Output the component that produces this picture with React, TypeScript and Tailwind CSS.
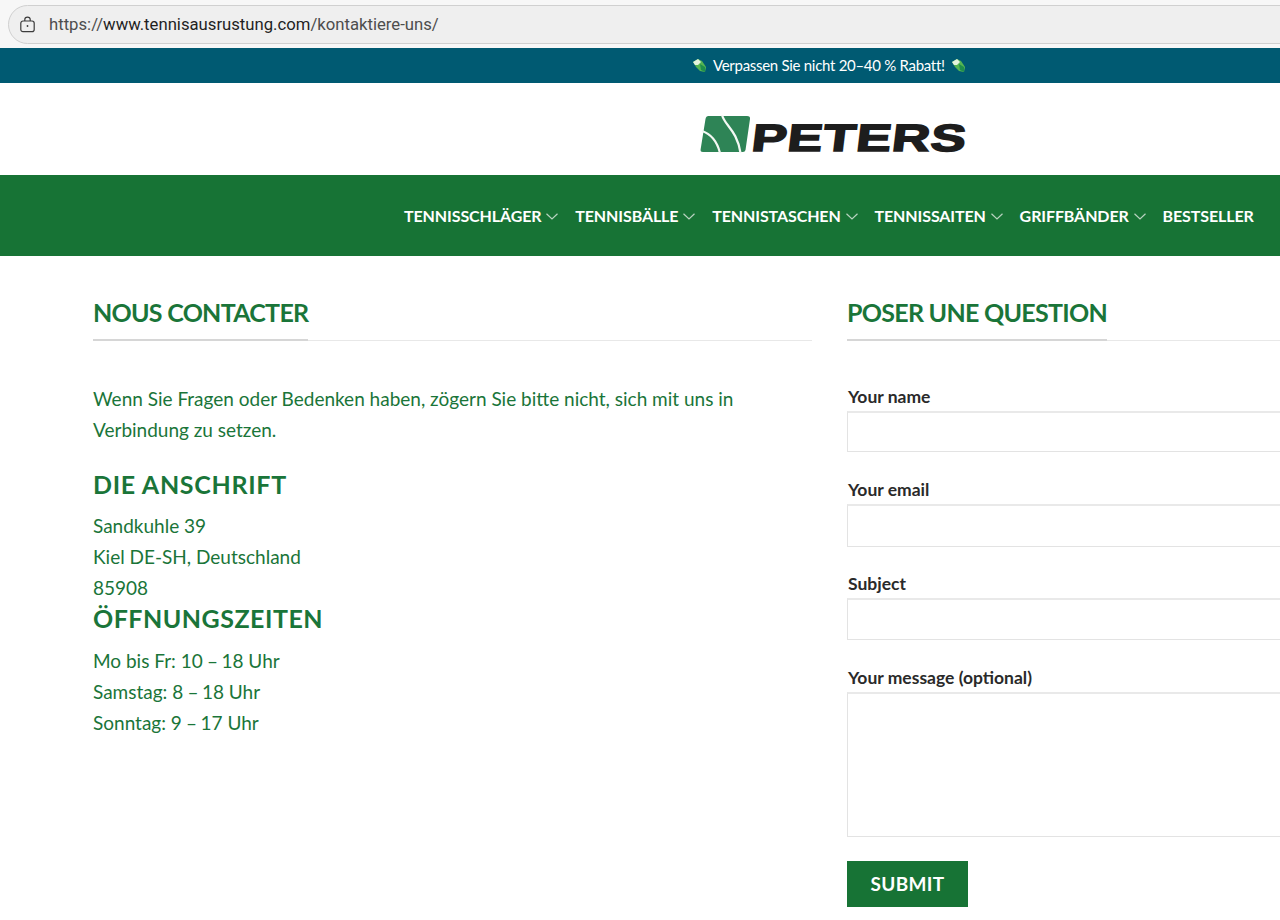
import React from "react";

function Leaf() {
  return (
    <svg width="15" height="15" viewBox="0 0 15 15" className="shrink-0">
      <path d="M1 4 L6 1 L10 3 L14 9 L13 14 L8 13 L4 9 Z" fill="#55b552" />
      <path d="M1 4 L6 1 L9 4 L6 7 L3 7 Z" fill="#e4f3dc" />
      <path d="M8 6 L13 9 L13 14 L9 12 Z" fill="#1f8f4c" />
    </svg>
  );
}

function Logo() {
  return (
    <svg width="52" height="38" viewBox="0 0 52 38" className="shrink-0">
      <path d="M9.5 1 L48 1 Q51.5 1 51 4 L46.5 35 Q46 37 44 37 L4 37 Q1.2 37 1.6 34.5 L6.5 4 Q7 1 9.5 1 Z" fill="#2e8456" />
      <path d="M23 0 C26 11 38 15 41.5 38" stroke="#f4f8f4" strokeWidth="2.2" fill="none" />
      <path d="M3 16 C12 19 18 26 21 38" stroke="#f4f8f4" strokeWidth="2.2" fill="none" />
    </svg>
  );
}

function Chevron() {
  return (
    <svg width="12" height="7" viewBox="0 0 12 7" fill="none" stroke="#b9d3c0" strokeWidth="1.2" className="shrink-0">
      <path d="M0.5 0.8 L6 6 L11.5 0.8" />
    </svg>
  );
}

function SectionTitle({ children }: { children: React.ReactNode }) {
  return (
    <div className="border-b border-[#e8e8e8] h-[50px] flex">
      <h2 className="h-[50px] border-b-2 border-[#d6d6d6] text-[25px] leading-[42px] font-bold text-[#1a7539] tracking-[-0.72px] whitespace-nowrap">
        {children}
      </h2>
    </div>
  );
}

function Field({ label, h, mb }: { label: string; h: string; mb: string }) {
  return (
    <div className={mb}>
      <div className="pl-px text-[17.5px] leading-[26px] font-bold text-[#2a2a2a] tracking-[0px] h-[24px]">{label}</div>
      <div className={`${h} mt-[3px] border border-[#e3e3e3] border-t-2 border-t-[#e9e9e9] bg-white`} />
    </div>
  );
}

const navItems = [
  { t: "TENNISSCHLÄGER", c: true },
  { t: "TENNISBÄLLE", c: true },
  { t: "TENNISTASCHEN", c: true },
  { t: "TENNISSAITEN", c: true },
  { t: "GRIFFBÄNDER", c: true },
  { t: "BESTSELLER", c: false },
];

function Hours({ a, b }: { a: string; b: string }) {
  return (
    <div>
      {a}
      <span className="tracking-[-0.7px]"> – </span>
      {b}
    </div>
  );
}

export default function App() {
  return (
    <div className="w-[1280px] h-[920px] overflow-hidden bg-white font-['Lato','Liberation_Sans',sans-serif]">
      <div className="h-[48px] bg-[#f7f7f7] pt-[5px] pl-[8px]">
        <div className="h-[39px] w-[1300px] rounded-l-[20px] bg-[#efefef] border border-[#d0d0d0] flex items-center pl-[11px] gap-[14px]">
          <svg width="15" height="17" viewBox="0 0 15 17" fill="none" stroke="#3c3c3c" strokeWidth="1.2" className="shrink-0">
            <rect x="0.8" y="5" width="13.4" height="10.6" rx="2.2" />
            <path d="M4.8 5 V3.4 a2.7 2.3 0 0 1 5.4 0 V5" />
            <circle cx="7.5" cy="10" r="0.9" fill="#3c3c3c" stroke="none" />
          </svg>
          <span className="font-['Roboto',sans-serif] text-[16.7px] text-[#1f1f1f] whitespace-nowrap">
            <span className="text-[#4d4d4d]">https://</span>www.tennisausrustung.com<span className="text-[#4d4d4d]">/kontaktiere-uns/</span>
          </span>
        </div>
      </div>

      <div className="h-[35px] bg-[#005a72] flex items-center pl-[692px] gap-[6px] text-[15px] tracking-[-0.29px] text-white">
        <Leaf />
        <span className="whitespace-nowrap">Verpassen Sie nicht 20–40 % Rabatt!</span>
        <Leaf />
      </div>

      <div className="h-[92px] bg-white flex items-center pl-[699px] pt-[9px]">
        <Logo />
        <span className="ml-[1px] mt-[8px] inline-block origin-left scale-x-[1.38] skew-x-[-5deg] font-['Liberation_Sans',sans-serif] font-bold text-[#1d1d1d] text-[38px] leading-none [-webkit-text-stroke:1.6px_#1d1d1d] tracking-[0.6px]">
          PETERS
        </span>
      </div>

      <nav className="h-[81px] bg-[#177335] flex items-start pl-[404px] pt-[30px] gap-[16.8px]">
        {navItems.map((n) => (
          <div key={n.t} className="flex items-center gap-[5px] h-[22px]">
            <span className="text-[16px] font-bold text-white tracking-[-0.1px] whitespace-nowrap">{n.t}</span>
            {n.c && <Chevron />}
          </div>
        ))}
      </nav>

      <main className="flex pl-[93px] gap-[35px] pt-[35px]">
        <section className="w-[719px] shrink-0">
          <SectionTitle>NOUS CONTACTER</SectionTitle>
          <p className="mt-[42px] text-[19px] leading-[31px] text-[#1a7539] w-[680px]">
            Wenn Sie Fragen oder Bedenken haben, zögern Sie bitte nicht, sich mit uns in Verbindung zu setzen.
          </p>
          <h3 className="mt-[20px] text-[25px] leading-[38px] font-bold text-[#1a7539] tracking-[0.7px]">DIE ANSCHRIFT</h3>
          <div className="mt-[7px] text-[19px] leading-[31px] text-[#1a7539]">
            <div>Sandkuhle 39</div>
            <div>Kiel DE-SH, Deutschland</div>
            <div>85908</div>
          </div>
          <h3 className="mt-[-4px] text-[25px] leading-[38px] font-bold text-[#1a7539] tracking-[0.5px]">ÖFFNUNGSZEITEN</h3>
          <div className="mt-[8px] text-[19px] leading-[31px] text-[#1a7539]">
            <Hours a="Mo bis Fr: 10" b="18 Uhr" />
            <Hours a="Samstag: 8" b="18 Uhr" />
            <Hours a="Sonntag: 9" b="17 Uhr" />
          </div>
        </section>
        <section className="w-[719px] shrink-0">
          <SectionTitle>POSER UNE QUESTION</SectionTitle>
          <div className="mt-[43px]">
            <Field label="Your name" h="h-[41px]" mb="mb-[25px]" />
            <Field label="Your email" h="h-[43px]" mb="mb-[24px]" />
            <Field label="Subject" h="h-[42px]" mb="mb-[25px]" />
            <Field label="Your message (optional)" h="h-[145px]" mb="mb-[24px]" />
            <button className="w-[121px] h-[46px] bg-[#177335] text-white text-[19px] font-bold tracking-[0.3px]">SUBMIT</button>
          </div>
        </section>
      </main>
    </div>
  );
}
